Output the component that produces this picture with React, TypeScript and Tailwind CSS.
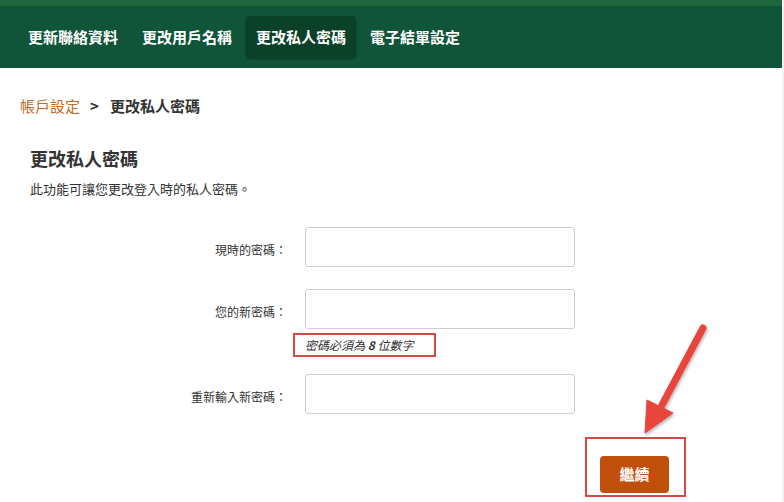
import React from "react";

const tabs = ["更新聯絡資料", "更改用戶名稱", "更改私人密碼", "電子結單設定"];

function Row({ label, className = "" }: { label: string; className?: string }) {
  return (
    <div className={`flex items-center ${className}`}>
      <div className="w-[287px] pt-[6px] text-right text-[12px] leading-[18px] text-[#333]">{label}</div>
      <div className="ml-[18px] h-[40px] w-[270px] rounded-[3px] border border-[#cccccc] bg-white" />
    </div>
  );
}

export default function App() {
  return (
    <div
      className="relative h-[502px] w-[784px] overflow-hidden bg-white"
      style={{ fontFamily: '"Noto Sans CJK TC", "Noto Sans", sans-serif' }}
    >
      <div className="h-[6px] bg-[#1e673c]" />
      <nav className="flex h-[62px] items-center gap-[4px] bg-[#10553a] pl-[18px]">
        {tabs.map((t, i) => (
          <div
            key={t}
            className={`flex h-[42px] items-center rounded-[4px] px-[10px] text-[15px] font-bold text-white ${
              i === 2 ? "bg-[#0a4128] shadow-[0_1px_3px_rgba(0,0,0,0.35)]" : ""
            }`}
          >
            {t}
          </div>
        ))}
      </nav>
      <div className="absolute right-0 top-0 h-full w-[2px] bg-[#f2f2f2]" />

      <div className="mt-[28px] flex items-center pl-[20px] text-[15px] leading-[20px]">
        <span className="text-[#c0692a]">帳戶設定</span>
        <span className="ml-[10px] font-bold text-[#333]">&gt;</span>
        <span className="ml-[11px] font-bold text-[#333]">更改私人密碼</span>
      </div>

      <h1 className="mt-[30px] pl-[30px] text-[18px] font-bold leading-[24px] text-[#333]">更改私人密碼</h1>
      <p className="mt-[10px] pl-[30px] text-[13px] leading-[18px] text-[#333]">此功能可讓您更改登入時的私人密碼。</p>

      <Row label="現時的密碼：" className="mt-[29px]" />
      <Row label="您的新密碼：" className="mt-[22px]" />
      <div className="ml-[293px] mt-[4px] flex h-[24px] w-[143px] items-center border-2 border-[#d24a45] pl-[10px] text-[12px] italic text-[#333]">
        密碼必須為&nbsp;<b className="font-bold">8</b>&nbsp;位數字
      </div>
      <Row label="重新輸入新密碼：" className="mt-[17px]" />

      <div className="ml-[585px] mt-[23px] h-[60px] w-[101px] border-2 border-[#d24a45] pl-[13px] pt-[17px]">
        <button className="flex h-[37px] w-[69px] items-center justify-center rounded-[4px] bg-[#c04f0c] text-[15px] font-bold text-white">
          繼續
        </button>
      </div>

      <svg className="absolute left-[630px] top-[315px]" width="90" height="125" viewBox="0 0 90 125">
        <defs>
          <filter id="sh" x="-30%" y="-30%" width="160%" height="160%">
            <feDropShadow dx="1" dy="2" stdDeviation="1.5" floodColor="#000" floodOpacity="0.3" />
          </filter>
        </defs>
        <g filter="url(#sh)" fill="#e8443e" stroke="#e8443e">
          <line x1="73" y1="13" x2="32" y2="90" strokeWidth="7" strokeLinecap="round" />
          <polygon points="17,85 43,98 15,118" strokeWidth="1" strokeLinejoin="round" />
        </g>
      </svg>
    </div>
  );
}
